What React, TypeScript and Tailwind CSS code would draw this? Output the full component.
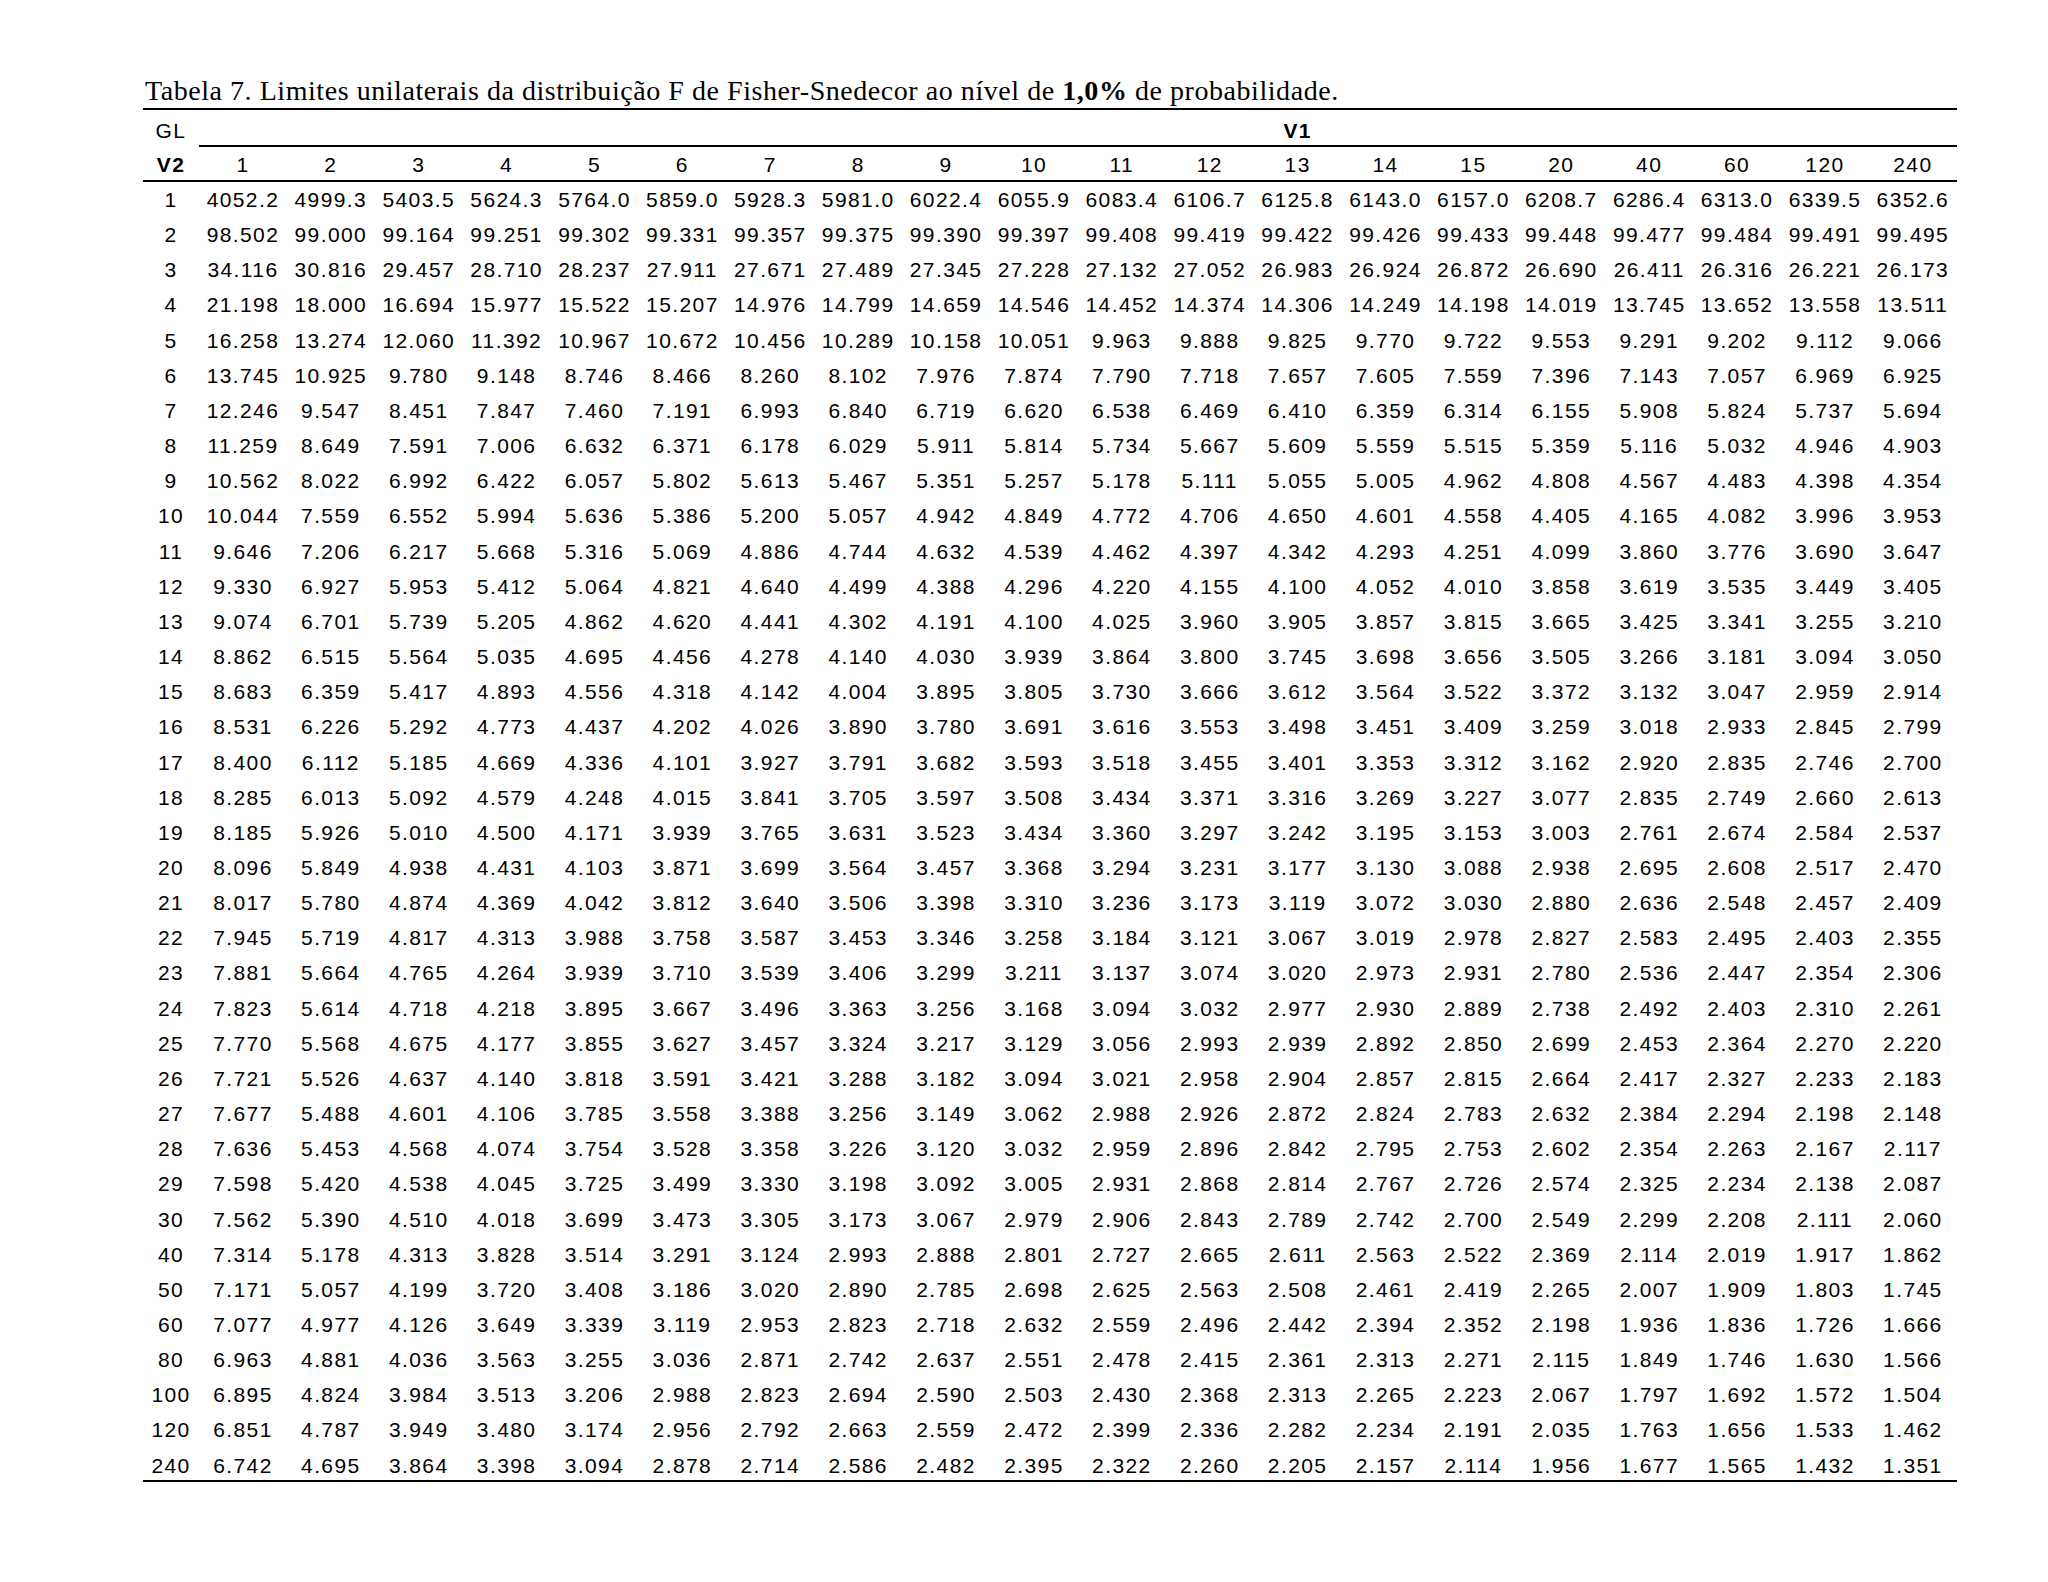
import React from "react";

const cols = ["1","2","3","4","5","6","7","8","9","10","11","12","13","14","15","20","40","60","120","240"];

const raw: [string, string][] = [
  ["1", "4052.2 4999.3 5403.5 5624.3 5764.0 5859.0 5928.3 5981.0 6022.4 6055.9 6083.4 6106.7 6125.8 6143.0 6157.0 6208.7 6286.4 6313.0 6339.5 6352.6"],
  ["2", "98.502 99.000 99.164 99.251 99.302 99.331 99.357 99.375 99.390 99.397 99.408 99.419 99.422 99.426 99.433 99.448 99.477 99.484 99.491 99.495"],
  ["3", "34.116 30.816 29.457 28.710 28.237 27.911 27.671 27.489 27.345 27.228 27.132 27.052 26.983 26.924 26.872 26.690 26.411 26.316 26.221 26.173"],
  ["4", "21.198 18.000 16.694 15.977 15.522 15.207 14.976 14.799 14.659 14.546 14.452 14.374 14.306 14.249 14.198 14.019 13.745 13.652 13.558 13.511"],
  ["5", "16.258 13.274 12.060 11.392 10.967 10.672 10.456 10.289 10.158 10.051 9.963 9.888 9.825 9.770 9.722 9.553 9.291 9.202 9.112 9.066"],
  ["6", "13.745 10.925 9.780 9.148 8.746 8.466 8.260 8.102 7.976 7.874 7.790 7.718 7.657 7.605 7.559 7.396 7.143 7.057 6.969 6.925"],
  ["7", "12.246 9.547 8.451 7.847 7.460 7.191 6.993 6.840 6.719 6.620 6.538 6.469 6.410 6.359 6.314 6.155 5.908 5.824 5.737 5.694"],
  ["8", "11.259 8.649 7.591 7.006 6.632 6.371 6.178 6.029 5.911 5.814 5.734 5.667 5.609 5.559 5.515 5.359 5.116 5.032 4.946 4.903"],
  ["9", "10.562 8.022 6.992 6.422 6.057 5.802 5.613 5.467 5.351 5.257 5.178 5.111 5.055 5.005 4.962 4.808 4.567 4.483 4.398 4.354"],
  ["10", "10.044 7.559 6.552 5.994 5.636 5.386 5.200 5.057 4.942 4.849 4.772 4.706 4.650 4.601 4.558 4.405 4.165 4.082 3.996 3.953"],
  ["11", "9.646 7.206 6.217 5.668 5.316 5.069 4.886 4.744 4.632 4.539 4.462 4.397 4.342 4.293 4.251 4.099 3.860 3.776 3.690 3.647"],
  ["12", "9.330 6.927 5.953 5.412 5.064 4.821 4.640 4.499 4.388 4.296 4.220 4.155 4.100 4.052 4.010 3.858 3.619 3.535 3.449 3.405"],
  ["13", "9.074 6.701 5.739 5.205 4.862 4.620 4.441 4.302 4.191 4.100 4.025 3.960 3.905 3.857 3.815 3.665 3.425 3.341 3.255 3.210"],
  ["14", "8.862 6.515 5.564 5.035 4.695 4.456 4.278 4.140 4.030 3.939 3.864 3.800 3.745 3.698 3.656 3.505 3.266 3.181 3.094 3.050"],
  ["15", "8.683 6.359 5.417 4.893 4.556 4.318 4.142 4.004 3.895 3.805 3.730 3.666 3.612 3.564 3.522 3.372 3.132 3.047 2.959 2.914"],
  ["16", "8.531 6.226 5.292 4.773 4.437 4.202 4.026 3.890 3.780 3.691 3.616 3.553 3.498 3.451 3.409 3.259 3.018 2.933 2.845 2.799"],
  ["17", "8.400 6.112 5.185 4.669 4.336 4.101 3.927 3.791 3.682 3.593 3.518 3.455 3.401 3.353 3.312 3.162 2.920 2.835 2.746 2.700"],
  ["18", "8.285 6.013 5.092 4.579 4.248 4.015 3.841 3.705 3.597 3.508 3.434 3.371 3.316 3.269 3.227 3.077 2.835 2.749 2.660 2.613"],
  ["19", "8.185 5.926 5.010 4.500 4.171 3.939 3.765 3.631 3.523 3.434 3.360 3.297 3.242 3.195 3.153 3.003 2.761 2.674 2.584 2.537"],
  ["20", "8.096 5.849 4.938 4.431 4.103 3.871 3.699 3.564 3.457 3.368 3.294 3.231 3.177 3.130 3.088 2.938 2.695 2.608 2.517 2.470"],
  ["21", "8.017 5.780 4.874 4.369 4.042 3.812 3.640 3.506 3.398 3.310 3.236 3.173 3.119 3.072 3.030 2.880 2.636 2.548 2.457 2.409"],
  ["22", "7.945 5.719 4.817 4.313 3.988 3.758 3.587 3.453 3.346 3.258 3.184 3.121 3.067 3.019 2.978 2.827 2.583 2.495 2.403 2.355"],
  ["23", "7.881 5.664 4.765 4.264 3.939 3.710 3.539 3.406 3.299 3.211 3.137 3.074 3.020 2.973 2.931 2.780 2.536 2.447 2.354 2.306"],
  ["24", "7.823 5.614 4.718 4.218 3.895 3.667 3.496 3.363 3.256 3.168 3.094 3.032 2.977 2.930 2.889 2.738 2.492 2.403 2.310 2.261"],
  ["25", "7.770 5.568 4.675 4.177 3.855 3.627 3.457 3.324 3.217 3.129 3.056 2.993 2.939 2.892 2.850 2.699 2.453 2.364 2.270 2.220"],
  ["26", "7.721 5.526 4.637 4.140 3.818 3.591 3.421 3.288 3.182 3.094 3.021 2.958 2.904 2.857 2.815 2.664 2.417 2.327 2.233 2.183"],
  ["27", "7.677 5.488 4.601 4.106 3.785 3.558 3.388 3.256 3.149 3.062 2.988 2.926 2.872 2.824 2.783 2.632 2.384 2.294 2.198 2.148"],
  ["28", "7.636 5.453 4.568 4.074 3.754 3.528 3.358 3.226 3.120 3.032 2.959 2.896 2.842 2.795 2.753 2.602 2.354 2.263 2.167 2.117"],
  ["29", "7.598 5.420 4.538 4.045 3.725 3.499 3.330 3.198 3.092 3.005 2.931 2.868 2.814 2.767 2.726 2.574 2.325 2.234 2.138 2.087"],
  ["30", "7.562 5.390 4.510 4.018 3.699 3.473 3.305 3.173 3.067 2.979 2.906 2.843 2.789 2.742 2.700 2.549 2.299 2.208 2.111 2.060"],
  ["40", "7.314 5.178 4.313 3.828 3.514 3.291 3.124 2.993 2.888 2.801 2.727 2.665 2.611 2.563 2.522 2.369 2.114 2.019 1.917 1.862"],
  ["50", "7.171 5.057 4.199 3.720 3.408 3.186 3.020 2.890 2.785 2.698 2.625 2.563 2.508 2.461 2.419 2.265 2.007 1.909 1.803 1.745"],
  ["60", "7.077 4.977 4.126 3.649 3.339 3.119 2.953 2.823 2.718 2.632 2.559 2.496 2.442 2.394 2.352 2.198 1.936 1.836 1.726 1.666"],
  ["80", "6.963 4.881 4.036 3.563 3.255 3.036 2.871 2.742 2.637 2.551 2.478 2.415 2.361 2.313 2.271 2.115 1.849 1.746 1.630 1.566"],
  ["100", "6.895 4.824 3.984 3.513 3.206 2.988 2.823 2.694 2.590 2.503 2.430 2.368 2.313 2.265 2.223 2.067 1.797 1.692 1.572 1.504"],
  ["120", "6.851 4.787 3.949 3.480 3.174 2.956 2.792 2.663 2.559 2.472 2.399 2.336 2.282 2.234 2.191 2.035 1.763 1.656 1.533 1.462"],
  ["240", "6.742 4.695 3.864 3.398 3.094 2.878 2.714 2.586 2.482 2.395 2.322 2.260 2.205 2.157 2.114 1.956 1.677 1.565 1.432 1.351"],
];

const rows = raw.map(([k, v]) => ({ k, vals: v.split(" ") }));

export default function App() {
  return (
    <div className="min-h-[1582px] w-full bg-white text-black">
      <div className="pl-[143px] pt-[76px]">
        <div
          className="mb-[2px] h-[30px] whitespace-nowrap pl-[2px] text-[28px] leading-[30px] tracking-[0.55px]"
          style={{ fontFamily: '"Liberation Serif", "Times New Roman", serif' }}
        >
          Tabela 7. Limites unilaterais da distribuição F de Fisher-Snedecor ao nível de <b>1,0%</b> de probabilidade.
        </div>
        <div
          className="w-[1814px] border-t-2 border-b-2 border-black text-[21px] tracking-[1.4px]"
          style={{ fontFamily: '"Liberation Sans", Arial, sans-serif' }}
        >
          <div className="flex">
            <div className="h-[37px] w-[56px] pt-[9px] text-center leading-[24px]">GL</div>
            {cols.map((c, i) => (
              <div key={c} className="h-[37px] w-[87.9px] border-b-2 border-black pt-[9px] text-center font-bold leading-[24px]">
                {i === 12 ? "V1" : ""}
              </div>
            ))}
          </div>
          <div className="flex border-b-2 border-black">
            <div className="h-[33px] w-[56px] pt-[6.4px] text-center font-bold leading-[24px]">V2</div>
            {cols.map((c) => (
              <div key={c} className="h-[33px] w-[87.9px] pt-[6.4px] text-center leading-[24px]">
                {c}
              </div>
            ))}
          </div>
          {rows.map((r, ri) => (
            <div key={r.k} className={ri === rows.length - 1 ? "flex h-[31.9px]" : "flex h-[35.17px]"}>
              <div className="w-[56px] pt-[6px] text-center leading-[24px]">{r.k}</div>
              {r.vals.map((v, i) => (
                <div key={i} className="w-[87.9px] pt-[6px] text-center leading-[24px]">
                  {v}
                </div>
              ))}
            </div>
          ))}
        </div>
      </div>
    </div>
  );
}
